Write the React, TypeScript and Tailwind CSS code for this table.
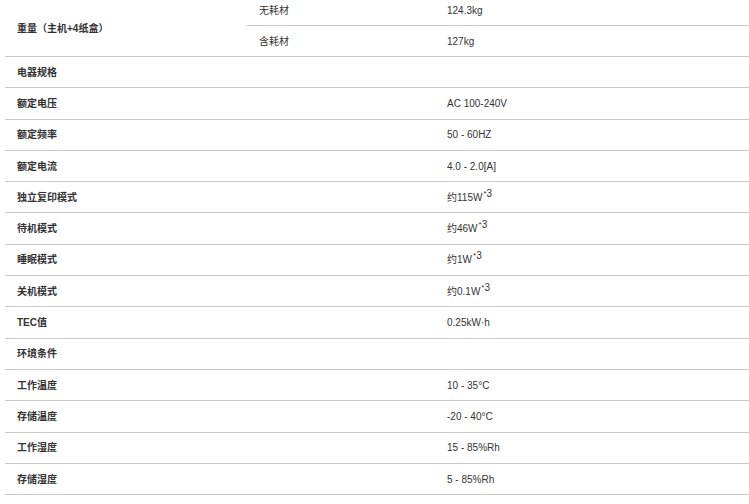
import React from 'react';

type Row = {
  label: string;
  value?: React.ReactNode;
};

// the "*3" note mark after the power values
const Note = () => (
  <span className="relative -top-[4px] ml-[1px] leading-none">
    <span className="text-[8px] relative -top-[1px]">*</span>
    <span className="text-[10px]">3</span>
  </span>
);

const rows: Row[] = [
  { label: '电器规格' },
  { label: '额定电压', value: 'AC 100-240V' },
  { label: '额定频率', value: '50 - 60HZ' },
  { label: '额定电流', value: '4.0 - 2.0[A]' },
  { label: '独立复印模式', value: <>约115W<Note /></> },
  { label: '待机模式', value: <>约46W<Note /></> },
  { label: '睡眠模式', value: <>约1W<Note /></> },
  { label: '关机模式', value: <>约0.1W<Note /></> },
  { label: 'TEC值', value: '0.25kW·h' },
  { label: '环境条件' },
  { label: '工作温度', value: '10 - 35°C' },
  { label: '存储温度', value: '-20 - 40°C' },
  { label: '工作湿度', value: '15 - 85%Rh' },
  { label: '存储湿度', value: '5 - 85%Rh' },
];

export default function App() {
  return (
    <div
      className="w-[749px] h-[504px] overflow-hidden bg-white pl-[5px] text-[10px] text-[#333]"
      style={{ fontFamily: '"Liberation Sans", "Noto Sans CJK SC", sans-serif' }}
    >
      {/* weight row with two sub rows */}
      <div className="grid grid-cols-[242px_1fr] border-b border-[#c9c9c9] h-[57px]">
        <div className="flex items-center pl-3 pt-[1px] font-bold">重量（主机+4纸盒）</div>
        <div className="flex flex-col">
          <div className="grid grid-cols-[188px_1fr] h-[26px] border-b border-[#c9c9c9] items-center pb-[4px]">
            <span className="pl-3">无耗材</span>
            <span className="pl-3">124.3kg</span>
          </div>
          <div className="grid grid-cols-[188px_1fr] flex-1 items-center">
            <span className="pl-3">含耗材</span>
            <span className="pl-3">127kg</span>
          </div>
        </div>
      </div>

      {rows.map((r) => (
        <div
          key={r.label}
          className="grid grid-cols-[242px_188px_1fr] h-[31.3px] border-b border-[#c9c9c9] items-center"
        >
          <span className="pl-3 font-bold">{r.label}</span>
          <span />
          <span className="pl-3">{r.value}</span>
        </div>
      ))}
    </div>
  );
}
